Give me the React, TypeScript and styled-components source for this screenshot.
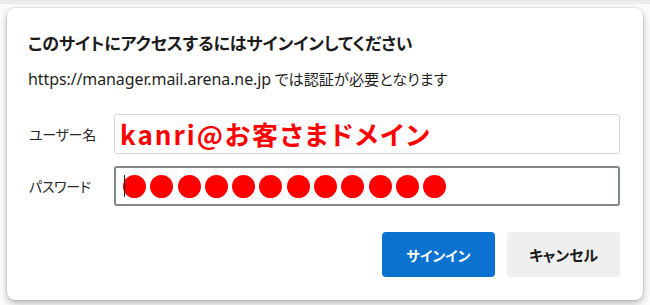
import styled, { createGlobalStyle } from "styled-components";

const GlobalStyle = createGlobalStyle`
  html, body {
    margin: 0;
    padding: 0;
    background: #fbfbfb;
  }
  body {
    font-family: "Noto Sans CJK JP", "Noto Sans", sans-serif;
    font-feature-settings: "palt";
  }
`;

const TopStrip = styled.div`
  height: 3px;
  background: linear-gradient(#e6e6e6, #f2f2f2);
  border-bottom: 1px solid #e9e9e9;
`;

const Page = styled.div`
  padding: 4px 7px 5px 7px;
`;

const Dialog = styled.div`
  box-sizing: border-box;
  width: 636px;
  height: 292px;
  background: #ffffff;
  border-radius: 8px;
  box-shadow: 0 0 0 1px rgba(0, 0, 0, 0.06), 0 3px 7px rgba(0, 0, 0, 0.28);
  padding: 23px 23px 23px 21px;
  display: flex;
  flex-direction: column;
`;

const Title = styled.h2`
  margin: 0;
  font-size: 17px;
  line-height: 24px;
  font-weight: 700;
  color: #1b1b1b;
  letter-spacing: -0.1px;
`;

const Message = styled.p`
  margin: 13px 0 0;
  font-size: 15.2px;
  line-height: 20px;
  color: #1f1f1f;
`;

const Url = styled.span`
  font-family: "Noto Sans", "Noto Sans CJK JP", sans-serif;
  font-size: 16px;
  letter-spacing: -0.1px;
`;

const Form = styled.div`
  margin-top: 25px;
  display: flex;
  flex-direction: column;
  gap: 12px;
`;

const Row = styled.div`
  display: grid;
  grid-template-columns: 86px 1fr;
  align-items: center;
`;

const Label = styled.label`
  font-size: 14px;
  color: #262626;
  padding-left: 1px;
  letter-spacing: -0.3px;
`;

const Field = styled.div<{ focused?: boolean }>`
  box-sizing: border-box;
  height: 40px;
  display: flex;
  align-items: center;
  background: #ffffff;
  border: ${(p) => (p.focused ? "2px solid #80868a" : "1px solid #d6d6d6")};
  border-radius: 3px;
  padding-left: ${(p) => (p.focused ? "7px" : "5px")};
  position: relative;
`;

const Value = styled.span`
  font-size: 26px;
  font-weight: 700;
  color: #ff0000;
  letter-spacing: 2px;
  line-height: 1;
`;

const Dots = styled.div`
  display: flex;
  gap: 4.3px;
`;

const Dot = styled.span`
  width: 23px;
  height: 23px;
  border-radius: 50%;
  background: #ff0000;
`;

const Caret = styled.span`
  position: absolute;
  left: 8px;
  top: 7px;
  width: 1px;
  height: 22px;
  background: #222;
`;

const Buttons = styled.div`
  margin-top: auto;
  display: flex;
  justify-content: flex-end;
  gap: 12px;
`;

const Button = styled.button<{ primary?: boolean }>`
  width: 113px;
  height: 45px;
  border: none;
  border-radius: 4px;
  font-family: "Noto Sans CJK JP", sans-serif;
  font-feature-settings: "palt";
  font-weight: 700;
  font-size: ${(p) => (p.primary ? "14px" : "15px")};
  background: ${(p) => (p.primary ? "#0b72d0" : "#efefef")};
  color: ${(p) => (p.primary ? "#ffffff" : "#1a1a1a")};
  cursor: pointer;
`;

export default function App() {
  return (
    <>
      <GlobalStyle />
      <TopStrip />
      <Page>
        <Dialog>
          <Title>このサイトにアクセスするにはサインインしてください</Title>
          <Message>
            <Url>https://manager.mail.arena.ne.jp</Url> では認証が必要となります
          </Message>
          <Form>
            <Row>
              <Label>ユーザー名</Label>
              <Field>
                <Value>kanri@お客さまドメイン</Value>
              </Field>
            </Row>
            <Row>
              <Label>パスワード</Label>
              <Field focused>
                <Caret />
                <Dots>
                  {Array.from({ length: 12 }).map((_, i) => (
                    <Dot key={i} />
                  ))}
                </Dots>
              </Field>
            </Row>
          </Form>
          <Buttons>
            <Button primary>サインイン</Button>
            <Button>キャンセル</Button>
          </Buttons>
        </Dialog>
      </Page>
    </>
  );
}
